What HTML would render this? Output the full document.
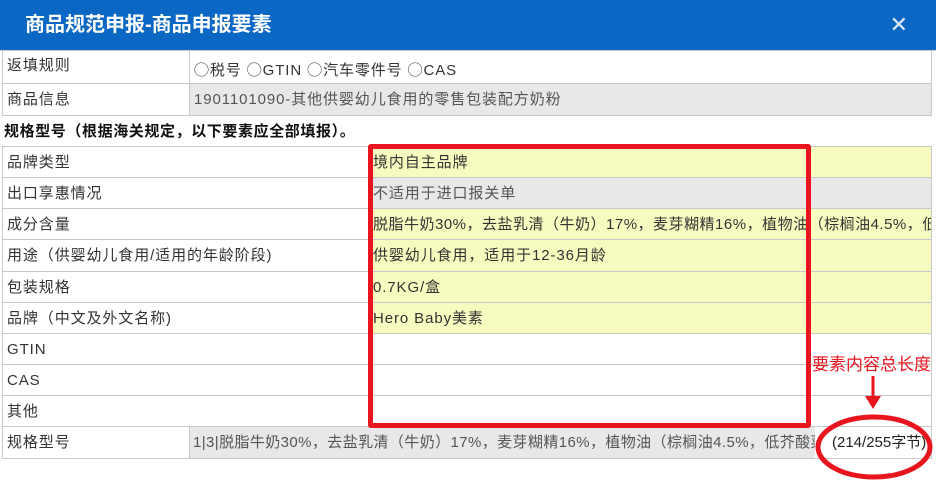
<!DOCTYPE html><html><head><meta charset="utf-8"><style>
body{margin:0;width:936px;height:501px;overflow:hidden;background:#fff;font-family:"Liberation Sans","Noto Sans CJK SC",sans-serif;font-size:15px;letter-spacing:0.9px;color:#333;position:relative}
.hd{position:absolute;left:0;top:0;width:936px;height:50px;background:#0b67c4;color:#fff;font-weight:bold;font-size:20px;line-height:50px;letter-spacing:0}
.hd span{position:absolute;left:25px}
.hd i{position:absolute;right:28px;top:0;font-style:normal;font-weight:normal;font-size:22px;color:#dfe8f3}
.r{position:absolute;left:2px;width:930px;border-bottom:1px solid #c8c8c8;box-sizing:border-box}
.c{position:absolute;top:0;bottom:0;padding-left:4px;line-height:31px;white-space:nowrap;overflow:hidden;box-sizing:border-box}
.l{left:0;border-left:1px solid #c8c8c8}
.v{right:0;border-left:1px solid #c8c8c8;border-right:1px solid #c8c8c8}
.y{background:#f8fbbf}.g{background:#e8e8e8;color:#555}
</style></head><body>
<div class="hd"><span>商品规范申报-商品申报要素</span><i>✕</i></div>
<div style="position:absolute;left:0;top:50px;width:936px;height:1px;background:#ccc"></div>
<div class="r" style="top:51px;height:33px"><div class="c l" style="width:187px;line-height:30px">返填规则</div><div class="c v" style="left:187px;line-height:40px">◯税号 ◯GTIN ◯汽车零件号 ◯CAS</div></div>
<div class="r" style="top:84px;height:32px"><div class="c l" style="width:187px">商品信息</div><div class="c v g" style="left:187px">1901101090-其他供婴幼儿食用的零售包装配方奶粉</div></div>
<div class="r" style="top:116px;height:31px"><div class="c" style="left:0;font-weight:bold;color:#111;padding-left:2px;letter-spacing:0.6px">规格型号（根据海关规定，以下要素应全部填报）。</div></div>
<div class="r" style="top:147px;height:31px"><div class="c l" style="width:366px">品牌类型</div><div class="c v y" style="left:366px">境内自主品牌</div></div>
<div class="r" style="top:178px;height:31px"><div class="c l" style="width:366px">出口享惠情况</div><div class="c v g" style="left:366px">不适用于进口报关单</div></div>
<div class="r" style="top:209px;height:31px"><div class="c l" style="width:366px">成分含量</div><div class="c v y" style="left:366px;letter-spacing:0.5px">脱脂牛奶30%，去盐乳清（牛奶）17%，麦芽糊精16%，植物油（棕榈油4.5%，低芥酸菜籽油</div></div>
<div class="r" style="top:240px;height:32px"><div class="c l" style="width:366px">用途（供婴幼儿食用/适用的年龄阶段)</div><div class="c v y" style="left:366px">供婴幼儿食用，适用于12-36月龄</div></div>
<div class="r" style="top:272px;height:31px"><div class="c l" style="width:366px">包装规格</div><div class="c v y" style="left:366px">0.7KG/盒</div></div>
<div class="r" style="top:303px;height:31px"><div class="c l" style="width:366px">品牌（中文及外文名称)</div><div class="c v y" style="left:366px">Hero Baby美素</div></div>
<div class="r" style="top:334px;height:31px"><div class="c l" style="width:366px">GTIN</div><div class="c v" style="left:366px"></div></div>
<div class="r" style="top:365px;height:31px"><div class="c l" style="width:366px">CAS</div><div class="c v" style="left:366px"></div></div>
<div class="r" style="top:396px;height:31px"><div class="c l" style="width:366px">其他</div><div class="c v" style="left:366px"></div></div>
<div class="r" style="top:427px;height:32px"><div class="c l" style="width:187px">规格型号</div><div class="c v" style="left:187px;padding:0"><div style="position:absolute;left:0;top:0;bottom:0;width:622px;background:#e8e8e8;color:#555;padding-left:3px;line-height:31px;overflow:hidden;white-space:nowrap;letter-spacing:0.4px">1|3|脱脂牛奶30%，去盐乳清（牛奶）17%，麦芽糊精16%，植物油（棕榈油4.5%，低芥酸菜</div><div style="position:absolute;left:642px;top:0;line-height:31px;color:#222;letter-spacing:0">(214/255字节)</div></div></div>
<div style="position:absolute;left:368px;top:144px;width:433px;height:274px;border:5px solid #e8141e;border-radius:3px"></div>
<div style="position:absolute;left:812px;top:350px;color:#e8141e;font-size:17px;letter-spacing:0;white-space:nowrap">要素内容总长度</div>
<svg style="position:absolute;left:0;top:0" width="936" height="501"><line x1="873" y1="376" x2="873" y2="398" stroke="#e8141e" stroke-width="3"/><polygon points="865,396 881,396 873,409" fill="#e8141e"/><ellipse cx="874" cy="447" rx="56" ry="30" fill="none" stroke="#e8141e" stroke-width="5"/></svg>
</body></html>
